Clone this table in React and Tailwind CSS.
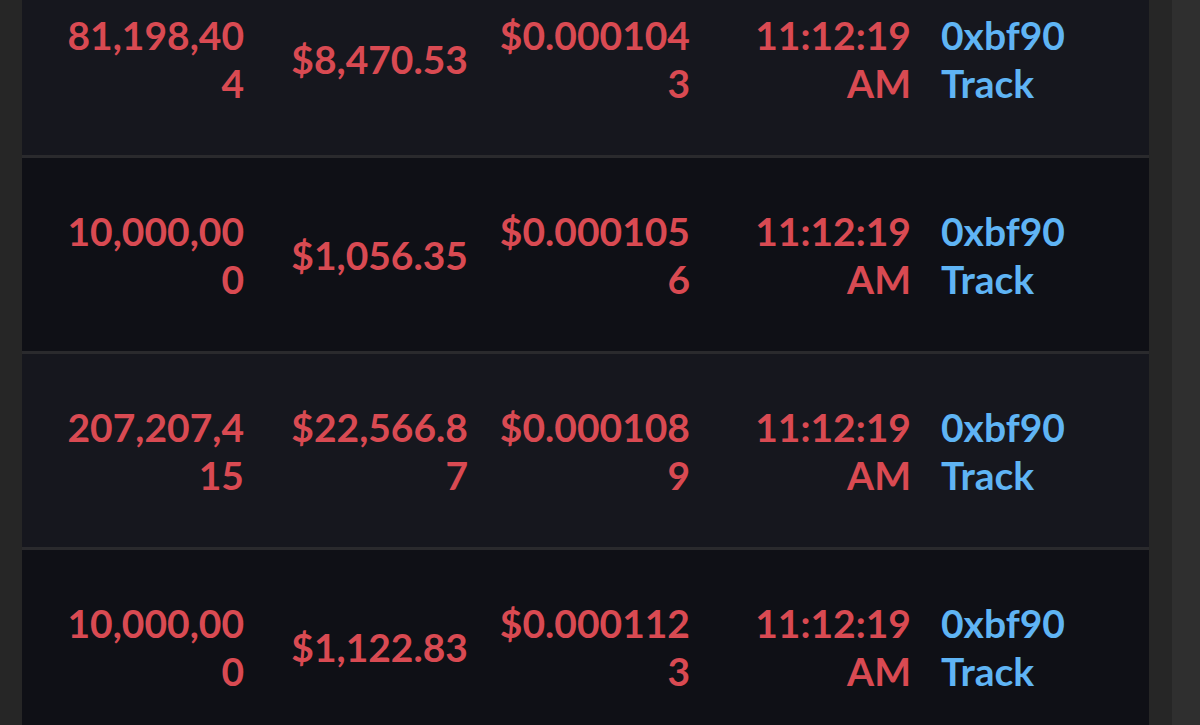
const trades = [
  { amount: '81,198,404', value: '$8,470.53', price: '$0.0001043', time: '11:12:19 AM', maker: '0xbf90' },
  { amount: '10,000,000', value: '$1,056.35', price: '$0.0001056', time: '11:12:19 AM', maker: '0xbf90' },
  { amount: '207,207,415', value: '$22,566.87', price: '$0.0001089', time: '11:12:19 AM', maker: '0xbf90' },
  { amount: '10,000,000', value: '$1,122.83', price: '$0.0001123', time: '11:12:19 AM', maker: '0xbf90' },
];

function TradeRow({ trade, index }) {
  const striped = index % 2 === 0 ? 'bg-[#16171e]' : 'bg-[#0f1016]';
  return (
    <div
      className={`flex items-center h-[196px] shrink-0 border-b-[3px] border-[#2a2a2d] ${striped} ${
        index === 0 ? '-mt-[47px]' : ''
      }`}
    >
      <div className="w-[222px] pl-[40px] text-right break-all text-[#d94a52]">{trade.amount}</div>
      <div className="w-[224px] pl-[42px] text-right break-all text-[#d94a52]">{trade.value}</div>
      <div className="w-[222px] pl-[26px] text-right break-all text-[#d94a52]">{trade.price}</div>
      <div className="w-[221px] pl-[51px] text-right text-[#d94a52]">
        <div>{trade.time.split(' ')[0]}</div>
        <div>{trade.time.split(' ')[1]}</div>
      </div>
      <div className="flex-1 pl-[30px] text-[#5fb4f4]">
        <a className="block" href="#">{trade.maker}</a>
        <a className="block" href="#">Track</a>
      </div>
    </div>
  );
}

export default function App() {
  return (
    <div
      className="flex w-[1200px] h-[725px] overflow-hidden bg-[#262626] text-[39px] leading-[48px] font-bold"
      style={{ fontFamily: 'Lato, "Noto Sans", sans-serif' }}
    >
      <div className="w-[22px] shrink-0" />
      <div className="w-[1127px] shrink-0 pt-[9px] flex flex-col overflow-hidden">
        {trades.map((trade, i) => (
          <TradeRow key={i} trade={trade} index={i} />
        ))}
      </div>
      <div className="w-[23px] shrink-0" />
      <div className="flex-1 bg-[#2f2f2f]" />
    </div>
  );
}
